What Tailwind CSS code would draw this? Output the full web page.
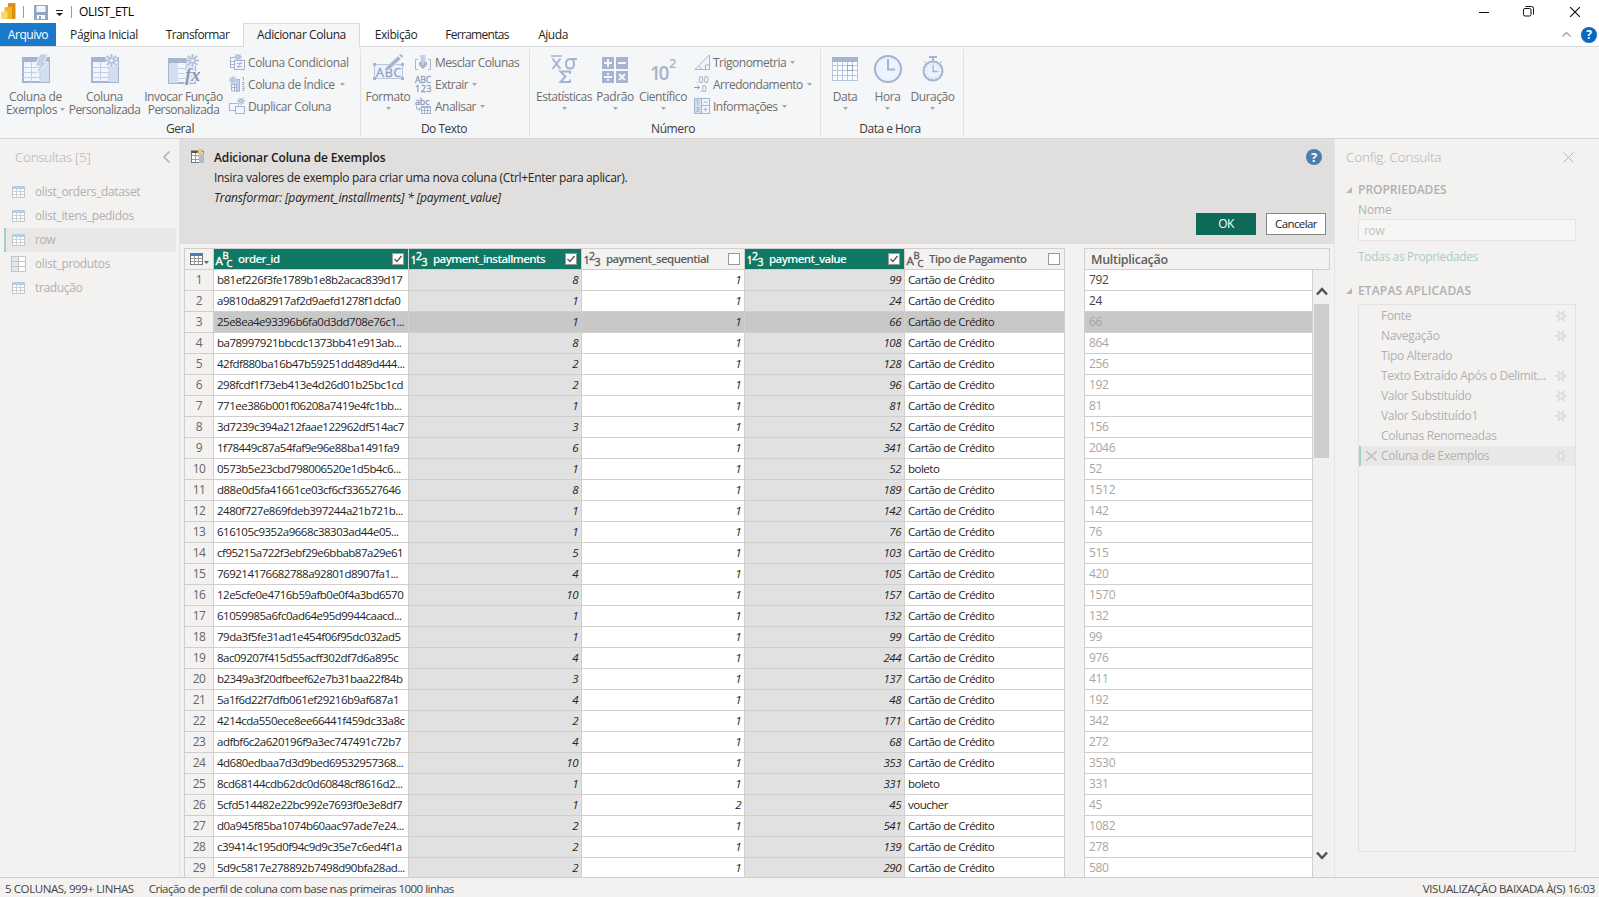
<!DOCTYPE html>
<html lang="pt-BR">

<head>
  <meta charset="UTF-8">
  <title>OLIST_ETL</title>
  <script src="https://cdn.jsdelivr.net/npm/@tailwindcss/browser@4"></script>
</head>

<body class="w-[1599px] h-[897px] overflow-hidden bg-white font-['Open_Sans','Noto_Sans',sans-serif] text-[12px] leading-[16px] tracking-[-0.3px] text-[#252423] flex flex-col whitespace-nowrap">

  <!-- icons -->
  <svg class="hidden">
    <symbol id="i-table" viewBox="0 0 28 26">
      <rect x="1" y="1" width="26" height="24" fill="#eff6ff" stroke="#a6b4cf" stroke-width="2" />
      <rect x="18" y="5" width="9" height="20" fill="#d3dff0" />
      <path d="M1 10.500h17M1 15.500h17M1 20.500h17M9.500 5v20M18 5v20" stroke="#c3cee2" fill="none" />
      <rect x="0" y="0" width="28" height="5" fill="#a6b4cf" />
    </symbol>
    <symbol id="i-star" viewBox="0 0 14 14">
      <path d="M7 0v14M0 7h14M2 2l10 10M12 2L2 12" stroke="#f5f6f7" stroke-width="4" />
      <path d="M7 0v14M0 7h14M2 2l10 10M12 2L2 12" stroke="#b3c0d8" stroke-width="2.200" />
      <circle cx="7" cy="7" r="1.700" fill="#f5f6f7" />
    </symbol>
    <symbol id="i-caret" viewBox="0 0 5 3">
      <path d="M0 0h5L2.500 3z" fill="#a8a8a8" />
    </symbol>
    <symbol id="i-query" viewBox="0 0 13 12">
      <rect x=".5" y=".5" width="12" height="11" fill="#fdfdfd" stroke="#c6c6c6" />
      <path d="M1 5.500h11M1 8.500h11M4.500 3v9M8.500 3v9" stroke="#d0d0d0" />
      <rect width="13" height="3" fill="#b9cde1" />
    </symbol>
    <symbol id="i-query-col" viewBox="0 0 15 16">
      <rect x=".5" y=".5" width="14" height="15" fill="#fdfdfd" stroke="#c6c6c6" />
      <rect x="1" y="1" width="6" height="14" fill="#e2e8ef" />
      <path d="M1 5.500h14M1 10.500h14M7.500 0v16" stroke="#c6c6c6" />
    </symbol>
    <symbol id="i-gear" viewBox="0 0 12 12">
      <path d="M.5 6h11M3.200 .8l5.600 10.400M8.800 .8L3.200 11.200" stroke="#dddcdb" stroke-width="1.900" />
      <circle cx="6" cy="6" r="3.500" fill="#dddcdb" />
      <circle cx="6" cy="6" r="1.700" fill="#f3f2f1" />
    </symbol>
    <symbol id="i-abc" viewBox="0 0 17 17" overflow="visible">
      <g fill="currentColor" stroke="currentColor" stroke-width=".4">
        <text x="-.5" y="13.500" font-size="11.500">A</text>
        <text x="6.500" y="8" font-size="9.500">B</text>
        <text x="10.500" y="16" font-size="9.500">C</text>
      </g>
    </symbol>
    <symbol id="i-123" viewBox="0 0 17 17" overflow="visible">
      <g fill="currentColor" stroke="currentColor" stroke-width=".4">
        <text x="-.5" y="13" font-size="11">1</text>
        <text x="5" y="9" font-size="10.500">2</text>
        <text x="10.500" y="15" font-size="10.500">3</text>
      </g>
    </symbol>
  </svg>

  <!-- title bar -->
  <header class="h-[23px] shrink-0 flex items-center">
    <svg class="w-[16px] h-[17px] ml-[1px]" viewBox="0 0 16 17">
      <rect x="7" y="0" width="7.500" height="16" rx="1" fill="#d9920f" />
      <rect x="3.500" y="4" width="7.500" height="12" rx="1" fill="#edb92b" />
      <rect x="0" y="8.500" width="6.500" height="7.500" rx="1" fill="#f7d865" />
    </svg>
    <span class="w-px h-[12px] bg-[#9a9a9a] ml-[6px]"></span>
    <svg class="w-[14px] h-[15px] ml-[10px] mt-[2px]" viewBox="0 0 14 15">
      <path d="M0 0h14v15H0z" fill="#92a6c6" />
      <path d="M2.500 1h9v6h-9zM3 10h8v4H3z" fill="#f4f7fc" />
      <rect x="5" y="11" width="2" height="3" fill="#92a6c6" />
    </svg>
    <svg class="w-[7px] h-[6px] ml-[8px] mt-[3px]" viewBox="0 0 7 6">
      <path d="M0 .5h7" stroke="#222" />
      <path d="M0 3h7L3.500 6z" fill="#222" />
    </svg>
    <span class="w-px h-[12px] bg-[#9a9a9a] ml-[8px]"></span>
    <h1 class="ml-[7px] text-black tracking-[-0.25px]">OLIST_ETL</h1>
    <div class="ml-auto flex items-center text-[#111] mr-[19px]">
      <svg class="w-[10px] h-[10px]" viewBox="0 0 10 10"><path d="M0 5.500h10" stroke="currentColor" /></svg>
      <svg class="w-[11px] h-[11px] ml-[34px] mr-px" viewBox="0 0 11 11" fill="none" stroke="currentColor">
        <rect x=".5" y="2.500" width="7.500" height="7.500" rx="1.500" />
        <path d="M2.500 .5h6q2 0 2 2v6" />
      </svg>
      <svg class="w-[10px] h-[10px] ml-[35px]" viewBox="0 0 10 10"><path d="M0 0l10 10M10 0L0 10" stroke="currentColor" stroke-width="1.200" /></svg>
    </div>
  </header>

  <!-- tabs -->
  <nav class="h-[24px] shrink-0 flex items-stretch text-center leading-[24px] border-b border-[#d9dadc] text-[#1f1f1f] tracking-[-0.45px]">
    <span class="w-[56px] bg-[#1979ca] text-white">Arquivo</span>
    <span class="w-[96px] tracking-[-0.35px]">Página Inicial</span>
    <span class="w-[91px] tracking-[-0.6px]">Transformar</span>
    <span class="w-[117px] -mb-px bg-[#f5f6f7] border border-b-0 border-[#d9dadc] leading-[22px] tracking-[-0.4px]">Adicionar Coluna</span>
    <span class="w-[72px]">Exibição</span>
    <span class="w-[90px] tracking-[-0.7px]">Ferramentas</span>
    <span class="w-[62px]">Ajuda</span>
    <div class="ml-auto flex items-center mr-[2px]">
      <svg class="w-[9px] h-[5px] mr-[10px]" viewBox="0 0 9 5"><path d="M.5 4.500l4-4 4 4" fill="none" stroke="#a0a0a0" stroke-width="1.200" /></svg>
      <span class="size-[16px] rounded-full bg-[#0a67c1] text-white font-bold text-[12px] leading-[16px]">?</span>
    </div>
  </nav>

  <!-- ribbon -->
  <section class="h-[92px] shrink-0 flex bg-[#f5f6f7] border-b border-[#d5d5d5] pt-[2px] pb-[2px] text-[#6f6f6f] leading-[13px] tracking-[-0.4px]">

    <div class="w-[361px] border-r border-[#e0e1e3] flex flex-col">
      <div class="flex h-[74px] pl-[1px]">
        <div class="w-[69px] flex flex-col items-center pt-[5px]">
          <svg class="w-[28px] h-[29px] mb-[7px]" viewBox="0 0 28 29">
            <use href="#i-table" y="3" width="28" height="26" />
            <path d="M18 0h8l-4 8h4L14 21l3-9h-4z" fill="#c5d0e4" stroke="#f5f6f7" />
          </svg>
          <span>Coluna de</span>
          <span class="flex items-center gap-[3px]">Exemplos <svg class="w-[5px] h-[3px]"><use href="#i-caret" /></svg></span>
        </div>
        <div class="w-[69px] flex flex-col items-center pt-[5px]">
          <svg class="w-[28px] h-[29px] mb-[7px]" viewBox="0 0 28 29">
            <use href="#i-table" y="3" width="28" height="26" />
            <use href="#i-star" x="14" y="0" width="13" height="13" />
          </svg>
          <span>Coluna</span>
          <span class="tracking-[-0.5px]">Personalizada</span>
        </div>
        <div class="w-[89px] flex flex-col items-center pt-[5px]">
          <svg class="w-[32px] h-[31px] mb-[5px]" viewBox="0 0 32 31">
            <use href="#i-table" y="4" width="28" height="26" />
            <rect x="1" y="9" width="9" height="20" fill="#d3dff0" />
            <use href="#i-star" x="18" y="0" width="13" height="13" />
            <text x="17" y="27" font-family="Liberation Serif" font-style="italic" font-weight="bold" font-size="19" fill="#8797b8" stroke="#f5f6f7" stroke-width="2" paint-order="stroke">fx</text>
          </svg>
          <span class="tracking-[-0.45px]">Invocar Função</span>
          <span class="tracking-[-0.5px]">Personalizada</span>
        </div>
        <div class="flex flex-col pt-[2px] pl-[1px]">
          <div class="h-[22px] flex items-center gap-[3px]">
            <svg class="size-[16px]" viewBox="0 0 16 16" fill="#eff6ff" stroke="#a6b4cf">
              <path d="M1.500 3v11M1 3.500h6M1 7.500h4M1 10.500h4M1 13.500h4" />
              <use href="#i-star" x="5" y="-1" width="8" height="8" />
              <rect x="5.500" y="6.500" width="10" height="9" />
              <path d="M8 9.500h5M8 12.500h5M12 8l-3 6" />
            </svg>Coluna Condicional
          </div>
          <div class="h-[22px] flex items-center gap-[3px]">
            <svg class="size-[16px]" viewBox="0 0 16 16" fill="#eff6ff" stroke="#a6b4cf">
              <path d="M2.500 5v10h8V3.500h-5M2.500 8.500h8M2.500 11.500h8M5.500 5v10" />
              <rect x="7.500" y="3.500" width="3" height="11.500" fill="#c5d0e4" />
              <use href="#i-star" x="0" y="0" width="8" height="8" />
              <path d="M13 1.500h1.500V5M13 6.500h2v2h-2M13 10.500h2v4h-2M13 12.500h2" fill="none" />
            </svg>Coluna de Índice <svg class="w-[5px] h-[3px] ml-[2px]"><use href="#i-caret" /></svg>
          </div>
          <div class="h-[22px] flex items-center gap-[3px]">
            <svg class="size-[16px]" viewBox="0 0 16 16" fill="#eff6ff" stroke="#a6b4cf">
              <rect x=".5" y="5.500" width="9" height="7" />
              <rect x="6.500" y="8.500" width="9" height="7" />
              <use href="#i-star" x="8" y="-1" width="8" height="8" />
            </svg>Duplicar Coluna
          </div>
        </div>
      </div>
      <div class="text-center text-[#3b3b3b] leading-[15px]">Geral</div>
    </div>

    <div class="w-[169px] border-r border-[#e0e1e3] flex flex-col">
      <div class="flex h-[74px]">
        <div class="w-[54px] flex flex-col items-center pt-[5px]">
          <svg class="w-[31px] h-[29px] mb-[7px]" viewBox="0 0 31 29">
            <rect x="1.500" y="10.500" width="28" height="14" fill="#eaf3ff" stroke="#b9c5db" />
            <path d="M0 9h3v3H0zM28 9h3v3h-3zM0 23h3v3H0zM28 23h3v3h-3z" fill="#a6b4cf" />
            <text x="3" y="22.500" font-size="12.500" textLength="25" fill="#8fa0be" stroke="#8fa0be" stroke-width=".3">ABC</text>
            <path d="M11 17l2-4L25 2l3 3L16 16z" fill="#a6b4cf" stroke="#f5f6f7" stroke-width=".7" />
            <path d="M26 1l2-1 2 2-1 2z" fill="#a6b4cf" />
          </svg>
          <span>Formato</span>
          <svg class="w-[5px] h-[3px] mt-[4px]"><use href="#i-caret" /></svg>
        </div>
        <div class="flex flex-col pt-[2px] tracking-[-0.5px]">
          <div class="h-[22px] flex items-center gap-[4px]">
            <svg class="size-[16px]" viewBox="0 0 16 16" fill="none" stroke="#a6b4cf">
              <path d="M3 5.500H.5v10H3M13 5.500h2.500v10H13" />
              <rect x="5.500" y="1" width="5" height="9" fill="#c5d0e4" stroke="none" />
              <path d="M4 8h2l2 3 2-3h2v3l-4 4-4-4z" fill="#a6b4cf" stroke="none" />
            </svg>Mesclar Colunas
          </div>
          <div class="h-[22px] flex items-center gap-[4px]">
            <svg class="size-[16px] overflow-visible" viewBox="0 0 16 16" fill="#8c9dbd" stroke="#8c9dbd" stroke-width=".3">
              <text x="0" y="7" font-size="8.500" textLength="15.500">ABC</text>
              <text x="0" y="15.500" font-size="9" textLength="16">123</text>
            </svg>Extrair <svg class="w-[5px] h-[3px]"><use href="#i-caret" /></svg>
          </div>
          <div class="h-[22px] flex items-center gap-[4px]">
            <svg class="size-[16px] overflow-visible" viewBox="0 0 16 16" fill="none" stroke="#a6b4cf">
              <text x="0" y="7" font-size="9" textLength="14" fill="#8c9dbd" stroke="#8c9dbd" stroke-width=".3">abc</text>
              <path d="M1.500 8v3h4M3.500 9l2 2-2 2" />
              <rect x="6.500" y="8.500" width="9" height="7" fill="#eff6ff" />
              <path d="M6 9.500h10M6 12.500h10M9.500 9v7M12.500 9v7" />
            </svg>Analisar <svg class="w-[5px] h-[3px]"><use href="#i-caret" /></svg>
          </div>
        </div>
      </div>
      <div class="text-center text-[#3b3b3b] leading-[15px] pr-[2px] tracking-[-0.5px]">Do Texto</div>
    </div>

    <div class="w-[291px] border-r border-[#e0e1e3] flex flex-col">
      <div class="flex h-[74px]">
        <div class="w-[68px] flex flex-col items-center pt-[5px]">
          <svg class="w-[26px] h-[29px] mb-[7px]" viewBox="0 0 26 29" fill="none" stroke="#a6b4cf" stroke-width="2">
            <path d="M0 2h11" stroke-width="1.500" />
            <path d="M1.500 4.500l8 10.500M9.500 4.500l-8 10.500" />
            <path d="M26 5h-7q-4 .5-4 5t4 4.500q4 0 4-4.500t-3-5" />
            <path d="M19 20v-2.500H9.500l5 5-5 5.500H19v-2.500" />
          </svg>
          <span class="tracking-[-0.5px]">Estatísticas</span>
          <svg class="w-[5px] h-[3px] mt-[4px]"><use href="#i-caret" /></svg>
        </div>
        <div class="w-[34px] flex flex-col items-center pt-[5px]">
          <svg class="w-[26px] h-[29px] mb-[7px]" viewBox="0 0 26 29" fill="none" stroke="#f5f6f7" stroke-width="2">
            <path d="M0 3h12v12H0zM14 3h12v12H14zM0 17h12v12H0zM14 17h12v12H14z" fill="#a6b4cf" stroke="none" />
            <path d="M2 9h8M6 5v8M16 9h8M2 23h8M17 20l6 6M23 20l-6 6" />
            <path d="M5 20h2M5 26h2" />
          </svg>
          <span>Padrão</span>
          <svg class="w-[5px] h-[3px] mt-[4px]"><use href="#i-caret" /></svg>
        </div>
        <div class="w-[62px] flex flex-col items-center pt-[5px]">
          <svg class="w-[26px] h-[29px] mb-[7px]" viewBox="0 0 26 29" fill="#a6b4cf" font-weight="600">
            <text x="0" y="26" font-size="19" textLength="19">10</text>
            <text x="19" y="14" font-size="13">2</text>
          </svg>
          <span>Científico</span>
          <svg class="w-[5px] h-[3px] mt-[4px]"><use href="#i-caret" /></svg>
        </div>
        <div class="flex flex-col pt-[2px] tracking-[-0.5px]">
          <div class="h-[22px] flex items-center gap-[3px]">
            <svg class="size-[16px]" viewBox="0 0 16 16" fill="#eff6ff" stroke="#a6b4cf">
              <path d="M.8 15.500L15.500 1v14.500zM11.500 15v-4h4M5 12q2 1 2 3" />
            </svg>Trigonometria <svg class="w-[5px] h-[3px] ml-[1px]"><use href="#i-caret" /></svg>
          </div>
          <div class="h-[22px] flex items-center gap-[3px]">
            <svg class="size-[16px] overflow-visible" viewBox="0 0 16 16" fill="#8c9dbd">
              <text x="2" y="7" font-size="8.500" textLength="12">.00</text>
              <text x="6" y="15.500" font-size="8.500">.0</text>
              <path d="M0 11.500h5M3.500 9.500l2 2-2 2" fill="none" stroke="#8c9dbd" />
            </svg>Arredondamento <svg class="w-[5px] h-[3px] ml-[1px]"><use href="#i-caret" /></svg>
          </div>
          <div class="h-[22px] flex items-center gap-[3px]">
            <svg class="size-[16px] overflow-visible" viewBox="0 0 16 16" fill="none" stroke="#a6b4cf">
              <rect x=".5" y=".5" width="15" height="15" fill="#eff6ff" />
              <rect x="1" y="1" width="6" height="14" fill="#d3dff0" stroke="none" />
              <path d="M7.500 0v16M8 7.500h8M9.500 4h4M9.500 11.500h4M11.500 9.500v4" />
              <text x="1.500" y="7" font-size="7" fill="#8c9dbd" stroke="none">1</text>
              <text x="1.500" y="14" font-size="7" fill="#8c9dbd" stroke="none">3</text>
            </svg>Informações <svg class="w-[5px] h-[3px] ml-[1px]"><use href="#i-caret" /></svg>
          </div>
        </div>
      </div>
      <div class="text-center text-[#3b3b3b] leading-[15px] pr-[4px]">Número</div>
    </div>

    <div class="w-[143px] border-r border-[#e0e1e3] flex flex-col">
      <div class="flex h-[74px] pl-[2px]">
        <div class="w-[44px] flex flex-col items-center pt-[5px]">
          <svg class="w-[26px] h-[29px] mb-[7px]" viewBox="0 0 26 29" fill="none" stroke="#b9c5db">
            <rect x=".5" y="4.500" width="25" height="22" fill="#fafcff" />
            <path d="M0 11.500h26M0 16.500h26M0 21.500h26M5.500 7v20M10.500 7v20M15.500 7v20M20.500 7v20" />
            <rect x="0" y="3" width="26" height="5" fill="#a6b4cf" stroke="none" />
            <rect x="15.500" y="11.500" width="5" height="5" stroke="#92a6c6" />
          </svg>
          <span>Data</span>
          <svg class="w-[5px] h-[3px] mt-[4px]"><use href="#i-caret" /></svg>
        </div>
        <div class="w-[41px] flex flex-col items-center pt-[5px]">
          <svg class="w-[28px] h-[29px] mb-[7px]" viewBox="0 0 28 29" fill="none" stroke="#a6b4cf">
            <circle cx="14" cy="15" r="13" fill="#eaf3ff" stroke-width="2" />
            <path d="M14 5v10.500h7" stroke-width="2" />
          </svg>
          <span>Hora</span>
          <svg class="w-[5px] h-[3px] mt-[4px]"><use href="#i-caret" /></svg>
        </div>
        <div class="w-[49px] flex flex-col items-center pt-[5px]">
          <svg class="w-[22px] h-[29px] mb-[7px]" viewBox="0 0 22 29" fill="none" stroke="#a6b4cf">
            <path d="M7 3h8M11 3v4" stroke-width="2" />
            <circle cx="11" cy="17" r="9.500" fill="#eaf3ff" stroke-width="2" />
            <circle cx="11" cy="17" r="7" stroke-dasharray="1 2.660" />
            <path d="M11 11v6.500h5" stroke-width="1.300" />
            <path d="M2 7l2 2M20 7l-2 2" />
          </svg>
          <span class="tracking-[-0.5px]">Duração</span>
          <svg class="w-[5px] h-[3px] mt-[4px]"><use href="#i-caret" /></svg>
        </div>
      </div>
      <div class="text-center text-[#3b3b3b] leading-[15px] pr-[4px] tracking-[-0.5px]">Data e Hora</div>
    </div>
  </section>

  <main class="h-[738px] shrink-0 flex bg-[#f3f2f1]">

    <!-- queries -->
    <aside class="w-[180px] border-r border-[#e6e5e4] pl-[4px] pr-[3px] text-[#b1b0af]">
      <div class="flex items-center justify-between h-[36px] pl-[11px] pr-[6px] text-[13.500px] font-light tracking-[-0.3px]">
        Consultas [5]
        <svg class="w-[7px] h-[12px]" viewBox="0 0 7 12"><path d="M6.500.5L1 6l5.500 5.500" fill="none" stroke="#b5b5b5" stroke-width="1.600" /></svg>
      </div>
      <ul id="queries" class="mt-[5px] tracking-[-0.35px]"></ul>
    </aside>

    <!-- examples editor -->
    <section class="w-[1154px] flex flex-col">
      <div class="h-[105px] shrink-0 bg-[#e1dfdd] flex pl-[11px] pr-[8px] pt-[9px]">
        <svg class="w-[14px] h-[14px] mt-[1px]" viewBox="0 0 14 14">
          <rect x=".5" y="2.500" width="12" height="11" fill="#fff" stroke="#777" />
          <path d="M1 6.500h8M1 10.500h8M4.500 3v10" stroke="#999" />
          <rect x="0" y="1.500" width="7" height="2.500" fill="#555" />
          <rect x="8" y="4" width="5" height="10" fill="#a9bdd3" />
          <path d="M8 0h5l-2.500 4H13L6.500 10l2-5H6z" fill="#eec27a" />
        </svg>
        <div class="ml-[9px] leading-[20px]">
          <h2 class="font-semibold text-[#1b1a19] tracking-[-0.13px]">Adicionar Coluna de Exemplos</h2>
          <p class="tracking-[-0.32px]">Insira valores de exemplo para criar uma nova coluna (Ctrl+Enter para aplicar).</p>
          <p class="italic tracking-[-0.15px]">Transformar: [payment_installments] * [payment_value]</p>
        </div>
        <div class="ml-auto flex flex-col items-end justify-between pb-[9px]">
          <span class="size-[16px] mr-[4px] mt-[1px] rounded-full bg-[#4a7db3] text-white text-center font-bold text-[13px] leading-[16px]">?</span>
          <div class="flex gap-[10px] leading-[20px] text-center">
            <button class="w-[60px] h-[22px] bg-[#0d6a59] text-white tracking-[-0.6px]">OK</button>
            <button class="w-[60px] h-[22px] bg-white border border-[#8a8886] text-[#252423] text-[11.500px] tracking-[-0.6px]">Cancelar</button>
          </div>
        </div>
      </div>

      <div class="flex flex-1 overflow-hidden pl-[4px] pt-[4px]">
        <div class="w-[881px] shrink-0 border-t border-l border-[#d0cfce]">
          <div id="gridHead" class="grid grid-cols-[29px_195px_173px_163px_160px_160px] h-[21px] font-semibold text-[11.500px] tracking-[-0.55px]"></div>
          <div id="gridBody" class="text-[11.500px] tracking-[-0.5px]"></div>
        </div>

        <div class="w-[246px] ml-[19px] flex flex-col">
          <div class="h-[22px] shrink-0 border border-[#d0cfce] pl-[6px] leading-[22px] text-[12.500px] font-semibold text-[#605e5c]">Multiplicação</div>
          <div class="flex flex-1 overflow-hidden">
            <div id="results" class="w-[229px] border-x border-[#d0cfce]"></div>
            <div class="flex-1 bg-[#f0f0f0] flex flex-col items-center pt-[16px] pb-[16px]">
              <svg class="w-[12px] h-[10px] shrink-0" viewBox="0 0 12 10"><path d="M1 8.500L6 3l5 5.500" fill="none" stroke="#505050" stroke-width="2.500" /></svg>
              <div class="w-[15px] h-[154px] bg-[#cdcdcd] mt-[8px]"></div>
              <svg class="w-[12px] h-[10px] mt-auto" viewBox="0 0 12 10"><path d="M1 1.500L6 7l5-5.500" fill="none" stroke="#505050" stroke-width="2.500" /></svg>
            </div>
          </div>
        </div>
      </div>
    </section>

    <!-- query settings -->
    <aside class="w-[265px] border-l border-[#e6e5e4] pl-[11px] pr-[23px] text-[#b1b0af] flex flex-col">
      <div class="flex items-center justify-between h-[36px] pr-[2px] text-[13.500px] font-light tracking-[-0.2px]">
        Config. Consulta
        <svg class="w-[11px] h-[11px]" viewBox="0 0 11 11"><path d="M.5.5l10 10M10.500.5l-10 10" stroke="#b5b5b5" /></svg>
      </div>
      <div class="flex items-center gap-[6px] h-[28px] font-semibold mt-px tracking-[0px]">
        <svg class="w-[6px] h-[6px]" viewBox="0 0 6 6"><path d="M6 0v6H0z" fill="#b9b9b9" /></svg>PROPRIEDADES
      </div>
      <div class="ml-[12px] tracking-[-0.35px]">
        <div class="h-[15px] leading-[12px] tracking-[-0.1px]">Nome</div>
        <div class="h-[22px] border border-[#e4e3e2] bg-[#f7f6f5] pl-[5px] leading-[22px] text-[#c4c3c2]">row</div>
        <div class="h-[32px] leading-[32px] text-[#abcbc4]">Todas as Propriedades</div>
      </div>
      <div class="flex items-center gap-[6px] h-[31px] font-semibold mt-[2px] tracking-[0.15px]">
        <svg class="w-[6px] h-[6px]" viewBox="0 0 6 6"><path d="M6 0v6H0z" fill="#b9b9b9" /></svg>ETAPAS APLICADAS
      </div>
      <ul id="steps" class="h-[548px] shrink-0 ml-[12px] pt-px border border-[#e4e3e2] tracking-[-0.3px] leading-[20px] -mt-[2px]"></ul>
    </aside>
  </main>

  <footer class="flex-1 border-t border-[#cfcecd] bg-[#f3f2f1] flex items-center pl-[5px] pr-[4px] pt-[2px] text-[11.500px] tracking-[-0.4px] text-[#444]">
    <span>5 COLUNAS, 999+ LINHAS</span>
    <span class="ml-[15px] tracking-[-0.52px]">Criação de perfil de coluna com base nas primeiras 1000 linhas</span>
    <span class="ml-auto">VISUALIZAÇÃO BAIXADA À(S) 16:03</span>
  </footer>

  <script>
    const queries = ['olist_orders_dataset', 'olist_itens_pedidos', 'row', 'olist_produtos', 'tradução'];

    const columns = [
      { name: 'order_id', type: 'abc', selected: true },
      { name: 'payment_installments', type: '123', selected: true },
      { name: 'payment_sequential', type: '123', selected: false },
      { name: 'payment_value', type: '123', selected: true },
      { name: 'Tipo de Pagamento', type: 'abc', selected: false },
    ];

    // order_id, installments, sequential, value, payment type, result
    const cc = 'Cartão de Crédito';
    const rows = [
      ['b81ef226f3fe1789b1e8b2acac839d17', 8, 1, 99, cc, 792],
      ['a9810da82917af2d9aefd1278f1dcfa0', 1, 1, 24, cc, 24],
      ['25e8ea4e93396b6fa0d3dd708e76c1...', 1, 1, 66, cc, 66],
      ['ba78997921bbcdc1373bb41e913ab...', 8, 1, 108, cc, 864],
      ['42fdf880ba16b47b59251dd489d444...', 2, 1, 128, cc, 256],
      ['298fcdf1f73eb413e4d26d01b25bc1cd', 2, 1, 96, cc, 192],
      ['771ee386b001f06208a7419e4fc1bb...', 1, 1, 81, cc, 81],
      ['3d7239c394a212faae122962df514ac7', 3, 1, 52, cc, 156],
      ['1f78449c87a54faf9e96e88ba1491fa9', 6, 1, 341, cc, 2046],
      ['0573b5e23cbd798006520e1d5b4c6...', 1, 1, 52, 'boleto', 52],
      ['d88e0d5fa41661ce03cf6cf336527646', 8, 1, 189, cc, 1512],
      ['2480f727e869fdeb397244a21b721b...', 1, 1, 142, cc, 142],
      ['616105c9352a9668c38303ad44e05...', 1, 1, 76, cc, 76],
      ['cf95215a722f3ebf29e6bbab87a29e61', 5, 1, 103, cc, 515],
      ['769214176682788a92801d8907fa1...', 4, 1, 105, cc, 420],
      ['12e5cfe0e4716b59afb0e0f4a3bd6570', 10, 1, 157, cc, 1570],
      ['61059985a6fc0ad64e95d9944caacd...', 1, 1, 132, cc, 132],
      ['79da3f5fe31ad1e454f06f95dc032ad5', 1, 1, 99, cc, 99],
      ['8ac09207f415d55acff302df7d6a895c', 4, 1, 244, cc, 976],
      ['b2349a3f20dfbeef62e7b31baa22f84b', 3, 1, 137, cc, 411],
      ['5a1f6d22f7dfb061ef29216b9af687a1', 4, 1, 48, cc, 192],
      ['4214cda550ece8ee66441f459dc33a8c', 2, 1, 171, cc, 342],
      ['adfbf6c2a620196f9a3ec747491c72b7', 4, 1, 68, cc, 272],
      ['4d680edbaa7d3d9bed69532957368...', 10, 1, 353, cc, 3530],
      ['8cd68144cdb62dc0d60848cf8616d2...', 1, 1, 331, 'boleto', 331],
      ['5cfd514482e22bc992e7693f0e3e8df7', 1, 2, 45, 'voucher', 45],
      ['d0a945f85ba1074b60aac97ade7e24...', 2, 1, 541, cc, 1082],
      ['c39414c195d0f94c9d9c35e7c6ed4f1a', 2, 1, 139, cc, 278],
      ['5d9c5817e278892b7498d90bfa28ad...', 2, 1, 290, cc, 580],
    ];

    const steps = [
      ['Fonte', true], ['Navegação', true], ['Tipo Alterado', false], ['Texto Extraído Após o Delimit...', true],
      ['Valor Substituído', true], ['Valor Substituído1', true], ['Colunas Renomeadas', false], ['Coluna de Exemplos', true],
    ];

    document.getElementById('queries').innerHTML = queries.map(q => `
      <li class="h-[24px] flex items-center border-l-2 ${q === 'row' ? 'bg-[#e9e8e7] border-[#a3cec4]' : 'border-transparent'}">
        <span class="w-[29px] flex pl-[5px]">${q === 'olist_produtos'
          ? '<svg class="w-[15px] h-[16px]"><use href="#i-query-col" /></svg>'
          : '<svg class="w-[13px] h-[12px] ml-[1px]"><use href="#i-query" /></svg>'}</span>${q}
      </li>`).join('');

    document.getElementById('gridHead').innerHTML = `
      <div class="border-r border-b border-[#d0cfce] flex items-center pl-[5px]">
        <svg class="w-[19px] h-[12px]" viewBox="0 0 19 12">
          <rect x=".5" y=".5" width="12" height="11" fill="#fff" stroke="#777" />
          <path d="M1 5.500h11M1 8.500h11M4.500 3v9M8.500 3v9" stroke="#999" />
          <rect width="13" height="3" fill="#4a7db3" />
          <path d="M14 8h5l-2.500 3z" fill="#666" />
        </svg>
      </div>` + columns.map(c => `
      <div class="flex items-center border-r border-b border-[#d0cfce] pl-[2px] pr-[4px] ${c.selected ? 'bg-[#117865] text-white' : 'text-[#605e5c]'}">
        <svg class="size-[17px] overflow-visible tracking-[0px] font-normal"><use href="#i-${c.type}" /></svg>
        <span class="ml-[5px] leading-[20px]">${c.name}</span>
        <svg class="size-[12px] ml-auto" viewBox="0 0 12 12">
          <rect x=".5" y=".5" width="11" height="11" fill="#fff" stroke="#9a9896" />
          ${c.selected ? '<path d="M2.500 6l2.500 2.500 4.500-5.500" fill="none" stroke="#555" stroke-width="1.300" />' : ''}
        </svg>
      </div>`).join('');

    document.getElementById('gridBody').innerHTML = rows.map((r, i) => {
      const active = i === 2;
      const plain = active ? 'bg-[#c8c8c8]' : 'bg-white';
      const shaded = active ? 'bg-[#c8c8c8]' : 'bg-[#e1e1e1]';
      const cell = 'border-r border-b border-[#d0cfce] leading-[20px]';
      return `
      <div class="grid grid-cols-[29px_195px_173px_163px_160px_160px] h-[21px]">
        <div class="${cell} text-center text-[12px] text-[#666]">${i + 1}</div>
        <div class="${cell} ${plain} pl-[3px]">${r[0]}</div>
        <div class="${cell} ${shaded} pr-[3px] text-right italic">${r[1]}</div>
        <div class="${cell} ${plain} pr-[3px] text-right italic">${r[2]}</div>
        <div class="${cell} ${shaded} pr-[3px] text-right italic">${r[3]}</div>
        <div class="${cell} ${plain} pl-[3px]">${r[4]}</div>
      </div>`;
    }).join('');

    document.getElementById('results').innerHTML = rows.map((r, i) => `
      <div class="h-[21px] border-b border-[#d0cfce] pl-[4px] leading-[20px] ${i === 2 ? 'bg-[#c8c8c8]' : 'bg-white'} ${i < 2 ? 'text-[#444]' : 'text-[#a6a6a6]'}">${r[5]}</div>`).join('');

    document.getElementById('steps').innerHTML = steps.map(([name, gear], i) => `
      <li class="h-[20px] flex items-center pr-[8px] border-l-2 ${i === 7 ? 'bg-[#e9e8e7] border-[#a3cec4]' : 'border-transparent'}">
        <span class="w-[20px] flex pl-[5px]">${i === 7 ? '<svg class="w-[11px] h-[10px]" viewBox="0 0 11 10"><path d="M0 0l11 10M11 0L0 10" stroke="#c2c1c0" stroke-width="1.600" /></svg>' : ''}</span>${name}
        ${gear ? '<svg class="size-[12px] ml-auto"><use href="#i-gear" /></svg>' : ''}
      </li>`).join('');
  </script>
</body>

</html>
